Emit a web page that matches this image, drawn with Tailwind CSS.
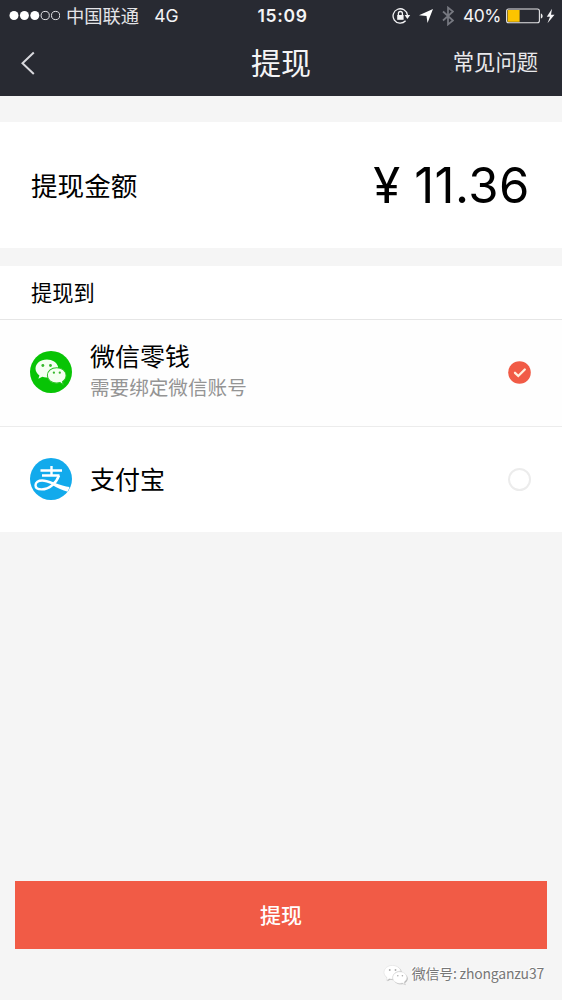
<!DOCTYPE html>
<html lang="zh-CN">
<head>
<meta charset="utf-8">
<title>提现</title>
<script src="https://cdn.jsdelivr.net/npm/@tailwindcss/browser@4"></script>
</head>
<body class="bg-[#f5f5f5]">
<svg class="hidden">
  <symbol id="bubbles" viewBox="0 0 30 25" overflow="visible">
    <path d="M11 0C5 0 0 4 0 9c0 3 1.600 5.300 4 7l-1 3.500 4-2c1.200.4 2.800.6 4.500.6C10.500 12 15 7.300 22 7.300 21 3 16.500 0 11 0Z"/>
    <path d="M20.500 8.300c-5 0-9 3.300-9 7.600s4 7.600 9 7.600c1.200 0 2.300-.2 3.300-.5l3.200 1.800-.8-3c2.200-1.400 3.600-3.500 3.600-5.900 0-4.300-4.300-7.600-9.300-7.600Z"/>
  </symbol>
</svg>
<div class="flex h-[1000px] w-[562px] flex-col bg-[#f5f5f5] font-['Inter','Noto_Sans_CJK_SC',sans-serif] text-black">
  <header class="h-24 bg-[#282a32] text-[#f4f4f6]">
    <div class="grid h-[31px] grid-cols-[1fr_auto_1fr] items-center">
      <div class="flex items-center pl-[9px] leading-none">
        <svg class="mr-[6px] h-[11px] w-[51px]" viewBox="0 0 51 11" fill="#fff">
          <circle cx="5" cy="5.500" r="4.500"/><circle cx="15.400" cy="5.500" r="4.500"/><circle cx="25.800" cy="5.500" r="4.500"/>
          <g fill="none" stroke="#e4e4e8" stroke-width="1"><circle cx="36.200" cy="5.500" r="4.100"/><circle cx="46.600" cy="5.500" r="4.100"/></g>
        </svg>
        <span class="pt-px text-[18.300px] text-[#e4e4e8]">中国联通</span>
        <span class="ml-[15px] text-[17.500px]">4G</span>
      </div>
      <div class="pl-[3px] text-[17.500px] leading-none font-semibold tracking-[0.700px]">15:09</div>
      <div class="flex items-center justify-end pr-[6px] leading-none">
        <svg class="mr-[8px] h-[18px] w-[19px]" viewBox="0 0 19 18" fill="none" stroke="#f4f4f6" stroke-width="1.300">
          <path d="M13.600 13.800A7.200 7.200 0 1 1 15.400 8"/><path d="M12.600 8h5.600l-2.800 4Z" fill="#f4f4f6" stroke="none"/>
          <rect x="5.200" y="8" width="6.400" height="4.800" fill="#f4f4f6" stroke="none"/><path d="M6.400 8V6.500a2 2 0 0 1 4 0V8"/>
        </svg>
        <svg class="mr-[9px] h-[14px] w-[14px]" viewBox="0 0 14 14" fill="#fff"><path d="M14 0 8.500 14 7.500 7 0 6.200Z"/></svg>
        <svg class="mr-[9px] h-[20px] w-[12px]" viewBox="0 0 12 20" fill="none" stroke="#777981" stroke-width="1.700"><path d="m1 5.500 10 9L6 18.500v-17l5 4-10 9"/></svg>
        <span class="mr-[5px] text-[17.500px] tracking-[-0.500px]">40%</span>
        <svg class="h-[16px] w-[50px]" viewBox="0 0 50 16">
          <rect x=".6" y="1" width="32.800" height="13.800" rx="2" fill="none" stroke="#e5e5e8" stroke-width="1.100"/>
          <rect x="1.600" y="2" width="12" height="11.800" fill="#fdc400"/><path d="M34.800 5.400c2.400.6 2.400 4.600 0 5.200Z" fill="#eee"/>
          <path d="m46 .8-5.200 8h3.200L41.500 15.200l7-8.400H45Z" fill="#f4f4f6"/>
        </svg>
      </div>
    </div>
    <div class="grid h-[63px] grid-cols-[1fr_auto_1fr] items-center">
      <svg class="ml-[20px] h-[24px] w-[16px]" viewBox="0 0 16 24" fill="none" stroke="#d8d8dd" stroke-width="2"><path d="M13.800 1.500 2.500 12.300 13.800 23"/></svg>
      <h1 class="text-[30px] leading-none">提现</h1>
      <a class="pr-[24px] text-right text-[21.300px] leading-none text-[#e8e8eb]">常见问题</a>
    </div>
  </header>
  <section class="mt-[26px] flex h-[126px] items-center justify-between bg-white pr-[32px] pl-[31px]">
    <span class="pt-[2px] text-[26.600px] leading-none">提现金额</span>
    <span class="flex items-center text-[49px] leading-none"><span class="mr-[14px]">¥</span><span class="tracking-[0.500px]">11.36</span></span>
  </section>
  <section class="mt-[18px] h-[266px] bg-white">
    <div class="flex h-[54px] items-center border-b border-[#e6e6e6] pt-[3px] pl-[31px] text-[21.200px]">提现到</div>
    <div class="flex h-[107px] items-center border-b border-[#ececec] bg-[#fefefe] pr-[31px] pb-[2px] pl-[30px]">
      <div class="grid size-[42px] shrink-0 place-items-center rounded-full bg-[#08c405]">
        <svg class="h-[27px] w-[32px]" viewBox="0 0 31 26">
          <path d="M11.500.5C5.300.5.500 4.300.5 9.200c0 2.800 1.400 5 3.800 6.600l-1 3.300 3.800-1.900c1.500.5 3 .7 4.600.6h8L22.400 7.500C21.200 3.400 16.900.5 11.500.5Z" fill="#f5fff2"/>
          <path d="M21 8.300c-5.100 0-9 3.300-9 7.500s3.900 7.500 9 7.500c1.200 0 2.200-.2 3.200-.5l3.200 1.900-.8-2.900c2.100-1.400 3.500-3.500 3.500-6 0-4.200-4-7.500-9.100-7.500Z" fill="#f5fff2" stroke="#28c522" stroke-width="1"/>
          <g fill="#36b82c"><circle cx="7.600" cy="6.200" r="1.400"/><circle cx="15" cy="6.200" r="1.400"/><circle cx="18.300" cy="13.200" r="1.100"/><circle cx="24" cy="13.200" r="1.100"/></g>
        </svg>
      </div>
      <div class="ml-[18px] flex flex-1 flex-col gap-[8px] pb-[2px]">
        <span class="text-[25px] leading-[25px]">微信零钱</span>
        <span class="text-[19.600px] leading-[20px] text-[#949494]">需要绑定微信账号</span>
      </div>
      <svg class="size-[23px]" viewBox="0 0 23 23"><circle cx="11.500" cy="11.500" r="11.300" fill="#f15b46"/><path d="m7 11.800 3.300 3.200L16.800 8.500" fill="none" stroke="#fff0df" stroke-width="2.300" stroke-linecap="round"/></svg>
    </div>
    <div class="flex h-[104px] items-center pr-[31px] pl-[30px]">
      <svg class="size-[42px]" viewBox="0 0 42 42">
        <circle cx="21" cy="21" r="21" fill="#12aaec"/>
        <g fill="none" stroke="#fff" stroke-width="2.400"><path d="M10.500 12.500h21.500M21.500 8v9.500M12 17.500h17.500"/><path d="M29 17.500c-2.700 7.500-9.800 13.900-17.300 13.900-3.900 0-6.200-1.700-6.200-4.200 0-2.900 2.900-4.700 6.700-4.700 7 0 15 6 27 7.700"/></g>
        <path d="M23 26.200c5 2 10 3 16 3.200l-1.300 4.300c-5.200-1.200-10.200-3.700-15-6.500Z" fill="#fff"/>
      </svg>
      <span class="ml-[18px] flex-1 pt-[3px] text-[25px] leading-none">支付宝</span>
      <span class="size-[23px] rounded-full border-2 border-[#ececec] bg-white"></span>
    </div>
  </section>
  <button class="mx-[15px] mt-auto h-[68px] bg-[#f15b46] pt-px text-[21px] leading-none font-medium text-white">提现</button>
  <footer class="flex h-[51px] items-center justify-end pr-[18px] text-[#777]">
    <svg class="mr-[5px] h-[20px] w-[23px] overflow-visible" viewBox="0 0 30 25">
      <use href="#bubbles" x="1.200" y="1.200" fill="#b5b5b5" width="30" height="25"/><use href="#bubbles" fill="#fff" stroke="#dedede" stroke-width=".7" width="30" height="25"/>
      <g fill="#aaa"><circle cx="7.500" cy="6" r="1.200"/><circle cx="15" cy="6" r="1.200"/><circle cx="18" cy="13.500" r="1"/><circle cx="24" cy="13.500" r="1"/></g>
    </svg>
    <span class="pb-[2px] font-['Noto_Sans_CJK_SC',sans-serif] text-[13.900px] leading-none tracking-[-0.150px] [text-shadow:-1px_-1px_0_#fff]">微信号: zhonganzu37</span>
  </footer>
</div>
</body>
</html>
